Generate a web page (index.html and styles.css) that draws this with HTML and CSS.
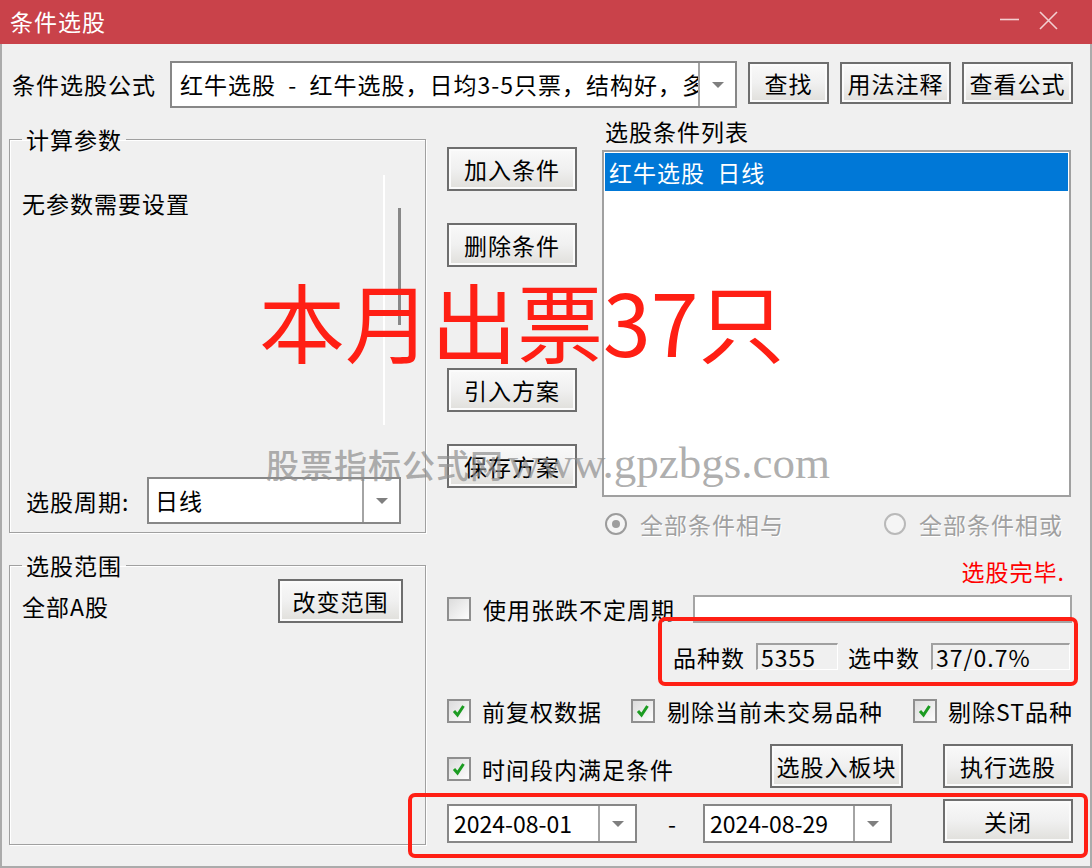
FILE: index.html
```html
<!DOCTYPE html>
<html lang="zh-CN">
<head>
<meta charset="utf-8">
<title>条件选股</title>
<link rel="stylesheet" href="styles.css">
</head>
<body>
<div class="window">
  <div class="titlebar">
    <span class="title">条件选股</span>
    <div class="winctl">
      <svg class="ctl-min" width="20" height="20" viewBox="0 0 20 20"><path d="M0 10.5 H19"/></svg>
      <svg class="ctl-close" width="19" height="19" viewBox="0 0 19 19"><path d="M1 1 L18 18 M18 1 L1 18"/></svg>
    </div>
  </div>
  <div class="body">
    <div class="formula-row">
      <span class="formula-label">条件选股公式</span>
      <div class="combo combo-formula">
        <span class="combo-text">红牛选股&nbsp;&nbsp;-&nbsp;&nbsp;红牛选股，日均3-5只票，结构好，多</span>
        <span class="combo-arrow"></span>
      </div>
      <button class="btn btn-top btn-find">查找</button>
      <button class="btn btn-top btn-wide">用法注释</button>
      <button class="btn btn-top btn-wide">查看公式</button>
    </div>

    <div class="main">
      <div class="left">
        <fieldset class="group group-params">
          <legend>计算参数</legend>
          <div class="params">
            <div class="params-text">无参数需要设置</div>
            <div class="track-w"></div>
            <div class="track-g"></div>
          </div>
          <div class="period">
            <span class="period-label">选股周期:</span>
            <div class="combo combo-period">
              <span class="combo-text">日线</span>
              <span class="combo-arrow"></span>
            </div>
          </div>
        </fieldset>
        <fieldset class="group group-range">
          <legend>选股范围</legend>
          <div class="range-row">
            <span class="range-text">全部A股</span>
            <button class="btn btn-range">改变范围</button>
          </div>
        </fieldset>
      </div>

      <div class="right">
        <div class="upper">
          <div class="midbtns">
            <button class="btn btn-mid">加入条件</button>
            <button class="btn btn-mid gap-sm">删除条件</button>
            <button class="btn btn-mid gap-lg">引入方案</button>
            <button class="btn btn-mid gap-sm">保存方案</button>
          </div>
          <div class="listcol">
            <div class="list-label">选股条件列表</div>
            <div class="listbox">
              <div class="list-item selected">红牛选股&nbsp;&nbsp;日线</div>
            </div>
            <div class="radios">
              <div class="radio-item radio-first"><span class="radio on"></span><span class="disabled-text">全部条件相与</span></div>
              <div class="radio-item"><span class="radio"></span><span class="disabled-text">全部条件相或</span></div>
            </div>
          </div>
        </div>

        <div class="status">选股完毕.</div>

        <div class="row-free">
          <span class="cb"></span>
          <span class="cb-text">使用张跌不定周期</span>
          <span class="free-input"></span>
        </div>

        <div class="stats">
          <span class="stat-label">品种数</span>
          <span class="stat-box stat-total">5355</span>
          <span class="stat-label stat-label2">选中数</span>
          <span class="stat-box stat-picked">37/0.7%</span>
        </div>

        <div class="checks">
          <div class="cb-item cb-item1"><span class="cb"><svg viewBox="0 0 20 20" width="20" height="20"><path d="M5 10 L8.5 14 L14.5 5"/></svg></span><span class="cb-text">前复权数据</span></div>
          <div class="cb-item cb-item2"><span class="cb"><svg viewBox="0 0 20 20" width="20" height="20"><path d="M5 10 L8.5 14 L14.5 5"/></svg></span><span class="cb-text">剔除当前未交易品种</span></div>
          <div class="cb-item"><span class="cb"><svg viewBox="0 0 20 20" width="20" height="20"><path d="M5 10 L8.5 14 L14.5 5"/></svg></span><span class="cb-text">剔除ST品种</span></div>
        </div>

        <div class="row-exec">
          <div class="cb-item cb-period"><span class="cb"><svg viewBox="0 0 20 20" width="20" height="20"><path d="M5 10 L8.5 14 L14.5 5"/></svg></span><span class="cb-text">时间段内满足条件</span></div>
          <button class="btn btn-board">选股入板块</button>
          <button class="btn btn-exec">执行选股</button>
        </div>

        <div class="row-date">
          <div class="combo combo-date combo-date1">
            <span class="combo-text">2024-08-01</span>
            <span class="combo-arrow"></span>
          </div>
          <span class="date-sep">-</span>
          <div class="combo combo-date combo-date2">
            <span class="combo-text">2024-08-29</span>
            <span class="combo-arrow"></span>
          </div>
          <button class="btn btn-close">关闭</button>
        </div>
      </div>
    </div>
  </div>

  <div class="big-note">本月出票37只</div>
  <div class="watermark"><span class="wm-cn">股票指标公式网</span><span class="wm-en">www.gpzbgs.com</span></div>
  <div class="mark mark-stats"></div>
  <div class="mark mark-dates"></div>
</div>
</body>
</html>
```

FILE: styles.css
```css
* { box-sizing: border-box; }
html, body { margin: 0; padding: 0; }
body {
  width: 1092px;
  height: 868px;
  overflow: hidden;
  background: #f0f0f0;
  font-family: "Noto Sans CJK SC", "Noto Sans", sans-serif;
  font-size: 23px;
  letter-spacing: 1px;
  color: #000;
}
.window { position: relative; width: 1092px; height: 868px; }

/* title bar */
.titlebar {
  height: 44px;
  background: #c9424a;
  display: flex;
  align-items: center;
  justify-content: space-between;
  padding: 0 34px 0 10px;
  color: #fff;
}
.title { line-height: 24px; margin-top: -2px; }
.winctl { display: flex; align-items: center; gap: 19px; margin-top: -4px; }
.winctl svg { stroke: #f3cfd1; stroke-width: 1.6; fill: none; display: block; }
.ctl-min { margin-top: -2px; }

/* body */
.body {
  height: 824px;
  border: 2px solid #ababab;
  border-top: 0;
  padding: 17px 17px 0 7px;
}

.formula-row { display: flex; align-items: flex-start; height: 47px; }
.formula-label { margin-left: 3px; width: 144px; line-height: 47px; white-space: nowrap; }

.combo { display: flex; background: #fff; border: 2px solid #878787; }
.combo-text { flex: 1; min-width: 0; overflow: hidden; white-space: nowrap; padding-left: 8px; }
.combo-arrow {
  width: 37px;
  flex: none;
  border-left: 2px solid #a4a4a4;
  display: flex;
  align-items: center;
  justify-content: center;
}
.combo-arrow::after {
  content: "";
  border-left: 6px solid transparent;
  border-right: 6px solid transparent;
  border-top: 6px solid #7f7f7f;
}
.combo-formula { margin-left: 14px; width: 567px; height: 47px; }
.combo-formula .combo-text { line-height: 43px; }

/* buttons */
.btn {
  font: inherit;
  letter-spacing: inherit;
  color: #000;
  border: 2px solid #6e6e6e;
  background: linear-gradient(#f9f9f9, #f0f0f0 50%, #e0dfdb);
  box-shadow: inset 0 0 0 2px #fbfbfb;
  padding: 0;
  height: 44px;
  line-height: 38px;
  white-space: nowrap;
}
.btn-top { height: 42px; margin-top: 1px; margin-left: 11px; line-height: 36px; }
.btn-find { width: 81px; }
.btn-wide { width: 111px; }

/* main */
.main { display: flex; margin-top: 10px; }
.left { width: 417px; flex: none; display: flex; flex-direction: column; }

.group {
  margin: 0;
  padding: 0 12px;
  min-width: 0;
  border: 1px solid #a0a0a0;
  box-shadow: inset 1px 1px 0 #fff, 1px 1px 0 #fff;
}
.group legend { padding: 0 4px; line-height: 26px; }
.group-params { margin-top: 8px; height: 407px; }
.group-range { margin-top: 19px; height: 293px; }

.params { display: flex; height: 288px; }
.params-text { flex: 1; padding-top: 39px; line-height: 24px; }
.track-w { width: 2px; height: 250px; margin-top: 23px; background: #fff; }
.track-g { width: 3px; height: 117px; margin-top: 56px; margin-left: 13px; margin-right: 12px; background: #888; }

.period { display: flex; align-items: center; margin-top: 37px; padding-right: 12px; }
.period-label { margin-left: 4px; line-height: 24px; }
.combo-period { margin-left: auto; width: 254px; height: 47px; }
.combo-period .combo-text { line-height: 43px; padding-left: 6px; }

.range-row { display: flex; justify-content: space-between; align-items: flex-start; margin-top: 1px; padding-right: 10px; }
.range-text { margin-top: 15px; line-height: 24px; }
.btn-range { width: 125px; }

/* right side */
.right { margin-left: 21px; width: 626px; flex: none; display: flex; flex-direction: column; }
.upper { display: flex; }
.midbtns { width: 130px; flex: none; display: flex; flex-direction: column; padding-top: 29px; }
.btn-mid { width: 130px; }
.gap-sm { margin-top: 32px; }
.gap-lg { margin-top: 101px; }

.listcol { margin-left: 25px; width: 469px; flex: none; }
.list-label { line-height: 26px; height: 26px; padding-left: 3px; }
.listbox { margin-top: 6px; height: 347px; background: #fff; border: 2px solid #a0a0a0; padding: 1px; }
.list-item { height: 38px; line-height: 38px; padding-left: 4px; white-space: nowrap; }
.list-item.selected { background: #0078d7; color: #fff; }

.radios { display: flex; align-items: center; margin-top: 15px; height: 24px; padding-left: 3px; }
.radio-item { display: flex; align-items: center; gap: 13px; }
.radio-first { width: 279px; }
.radio {
  width: 22px; height: 22px; flex: none;
  border-radius: 50%;
  border: 2px solid #b9b9b9;
  background: #f5f5f5;
  display: flex; align-items: center; justify-content: center;
}
.radio.on { border-color: #9c9c9c; }
.radio.on::after { content: ""; width: 8px; height: 8px; border-radius: 50%; background: #9d9d9d; }
.disabled-text { color: #a0a0a0; text-shadow: 1px 1px 0 #fff; line-height: 24px; }

.status { margin-top: 23px; height: 24px; line-height: 24px; text-align: right; padding-right: 8px; color: #ff0000; }

.cb {
  width: 24px; height: 24px; flex: none;
  border: 2px solid #8f8f8f;
  background: linear-gradient(135deg, #dcdcdc, #fdfdfd);
  display: flex; align-items: center; justify-content: center;
}
.cb svg { display: block; }
.cb svg path { stroke: #1c9c22; stroke-width: 3; fill: none; }
.cb-text { line-height: 24px; white-space: nowrap; }
.cb-item { display: flex; align-items: center; gap: 11px; }

.row-free { display: flex; align-items: center; margin-top: 13px; height: 26px; gap: 12px; }
.free-input { margin-left: auto; margin-right: 1px; width: 379px; height: 28px; background: #fff; border: 2px solid #a5a5a5; }

.stats { display: flex; align-items: center; margin-top: 21px; height: 27px; padding-left: 226px; }
.stat-label { width: 72px; line-height: 24px; white-space: nowrap; }
.stat-label2 { margin-left: 10px; }
.stat-box {
  margin-left: 11px;
  height: 27px;
  line-height: 25px;
  padding-left: 3px;
  border-top: 2px solid #a0a0a0;
  border-left: 2px solid #a0a0a0;
  border-right: 1px solid #fff;
  border-bottom: 1px solid #fff;
  white-space: nowrap;
}
.stat-total { width: 82px; }
.stat-picked { width: 139px; }

.checks { display: flex; align-items: center; margin-top: 29px; height: 24px; }
.cb-item1 { width: 184px; }
.cb-item2 { width: 282px; gap: 12px; }

.row-exec { display: flex; align-items: flex-start; margin-top: 21px; height: 44px; }
.cb-period { margin-top: 13px; }
.btn-board { margin-left: auto; margin-right: 40px; width: 133px; }
.btn-exec { width: 130px; }

.row-date { display: flex; align-items: flex-start; margin-top: 11px; height: 44px; }
.combo-date { margin-top: 5px; height: 39px; }
.combo-date .combo-text { line-height: 35px; padding-left: 5px; letter-spacing: 0; }
.combo-date1 { width: 190px; }
.combo-date2 { width: 189px; margin-left: 27px; }
.date-sep { width: 8px; margin-left: 31px; margin-top: 12px; line-height: 24px; }
.btn-close { margin-left: auto; width: 130px; }

/* overlays (annotations painted over the dialog) */
.big-note {
  position: absolute;
  left: 259px;
  top: 277px;
  font-size: 86px;
  line-height: 86px;
  letter-spacing: 0;
  color: #ff1f14;
  white-space: nowrap;
  pointer-events: none;
}
.watermark {
  position: absolute;
  left: 266px;
  top: 438px;
  height: 50px;
  display: flex;
  align-items: baseline;
  color: rgba(140, 140, 140, 0.7);
  white-space: nowrap;
  letter-spacing: 0;
  pointer-events: none;
}
.wm-cn { font-size: 33px; font-weight: 500; line-height: 50px; letter-spacing: 1px; }
.wm-en { font-family: "Liberation Serif", "DejaVu Serif", serif; font-size: 45px; line-height: 50px; margin-left: 4px; }
.mark {
  position: absolute;
  border: 4px solid #ff1f14;
  border-radius: 7px;
  pointer-events: none;
}
.mark-stats { left: 658px; top: 617px; width: 420px; height: 69px; }
.mark-dates { left: 408px; top: 793px; width: 680px; height: 65px; }
```
